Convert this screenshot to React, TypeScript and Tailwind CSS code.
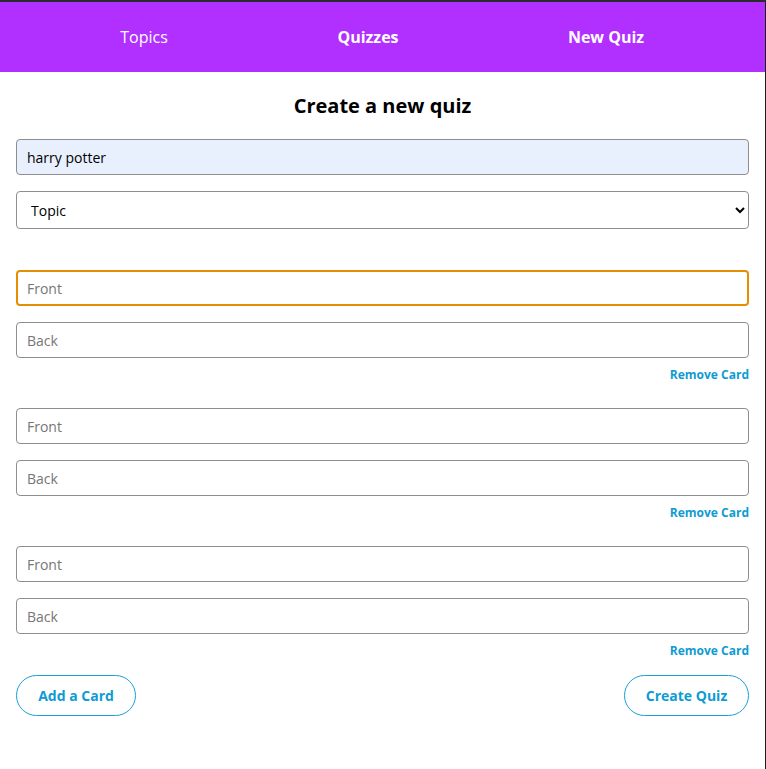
import { useState } from 'react'

interface Card {
  id: number
  front: string
  back: string
}

export default function App() {
  const [name, setName] = useState('harry potter')
  const [cards, setCards] = useState<Card[]>([
    { id: 1, front: '', back: '' },
    { id: 2, front: '', back: '' },
    { id: 3, front: '', back: '' },
  ])

  const removeCard = (id: number) => setCards(cards.filter(c => c.id !== id))
  const addCard = () => setCards([...cards, { id: Date.now(), front: '', back: '' }])

  const base =
    'block w-full h-9 rounded-[4px] border border-[#8e8e8e] px-[10px] text-[14px] text-black outline-none placeholder:text-[#767676]'

  return (
    <div className="min-h-screen bg-white font-['Open_Sans',sans-serif] border-t-2 border-[#2b2b2b] border-r border-r-[#1e1e1e] w-[766px]">
      <nav className="h-[70px] bg-[#b12fff] flex items-center text-white text-[16px]">
        <a className="w-[288px] text-center">Topics</a>
        <a className="w-[160px] text-center font-bold">Quizzes</a>
        <a className="w-[316px] text-center font-bold">New Quiz</a>
      </nav>

      <section className="px-4">
        <h2 className="text-[20px] font-bold text-center text-black mt-[21px] mb-[20px] leading-[26px]">Create a new quiz</h2>

        <input
          className={`${base} bg-[#e8f0fe]`}
          value={name}
          onChange={e => setName(e.target.value)}
        />

        <select className="block w-full h-[38px] mt-4 rounded-[4px] border border-[#8e8e8e] bg-white pl-[10px] pr-2 text-[14px] text-black outline-none">
          <option>Topic</option>
        </select>

        <div className="mt-[41px]">
          {cards.map((c, i) => (
            <div key={c.id} className="mb-[25px] last:mb-[16px]">
              <input
                placeholder="Front"
                className={
                  i === 0
                    ? 'block w-full h-9 rounded-[4px] border-2 border-[#e58e00] bg-white px-[9px] text-[14px] text-black outline-none placeholder:text-[#767676]'
                    : `${base} bg-white`
                }
                autoFocus={i === 0}
              />
              <input placeholder="Back" className={`${base} bg-white mt-4`} />
              <div className="flex justify-end mt-[9px]">
                <button
                  onClick={() => removeCard(c.id)}
                  className="text-[12px] font-bold text-[#0e9bd3] leading-[16px]">
                  Remove Card
                </button>
              </div>
            </div>
          ))}
        </div>

        <div className="flex justify-between">
          <button
            onClick={addCard}
            className="h-[41px] w-[120px] rounded-full border border-[#1a9fd6] text-[14px] font-bold text-[#0e9bd3]">
            Add a Card
          </button>
          <button className="h-[41px] w-[125px] rounded-full border border-[#1a9fd6] text-[14px] font-bold text-[#0e9bd3]">
            Create Quiz
          </button>
        </div>
      </section>
    </div>
  )
}
